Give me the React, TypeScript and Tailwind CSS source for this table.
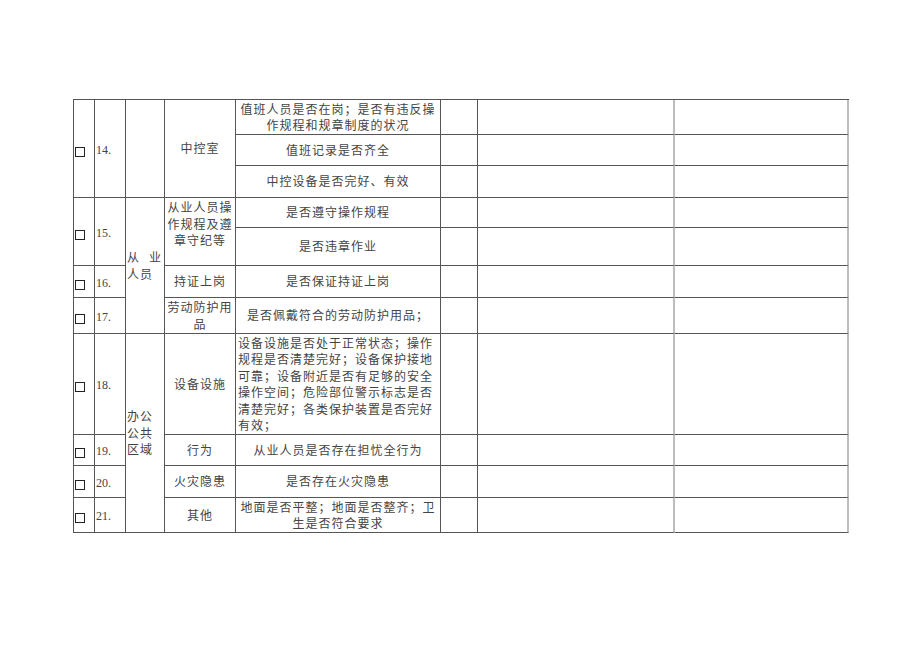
import React from 'react'

const cjk = { fontFamily: '"Noto Sans CJK SC", "Noto Sans", sans-serif' }
const serif = { fontFamily: '"Liberation Serif", "Times New Roman", serif' }

const cell = 'border-r border-b border-[#555] text-[12px] tracking-[1px] leading-[16.5px] text-[#444]'

type Group = {
  no: string
  start: number
  span: number
  item: string[]
  itemTop?: boolean
  content: { lines: string[]; left?: boolean }[]
}

const groups: Group[] = [
  {
    no: '14.',
    start: 1,
    span: 3,
    item: ['中控室'],
    content: [
      { lines: ['值班人员是否在岗；是否有违反操', '作规程和规章制度的状况'] },
      { lines: ['值班记录是否齐全'] },
      { lines: ['中控设备是否完好、有效'] },
    ],
  },
  {
    no: '15.',
    start: 4,
    span: 2,
    item: ['从业人员操', '作规程及遵', '章守纪等'],
    itemTop: true,
    content: [{ lines: ['是否遵守操作规程'] }, { lines: ['是否违章作业'] }],
  },
  { no: '16.', start: 6, span: 1, item: ['持证上岗'], content: [{ lines: ['是否保证持证上岗'] }] },
  {
    no: '17.',
    start: 7,
    span: 1,
    item: ['劳动防护用', '品'],
    content: [{ lines: ['是否佩戴符合的劳动防护用品；'] }],
  },
  {
    no: '18.',
    start: 8,
    span: 1,
    item: ['设备设施'],
    content: [
      {
        left: true,
        lines: [
          '设备设施是否处于正常状态；操作',
          '规程是否清楚完好；设备保护接地',
          '可靠；设备附近是否有足够的安全',
          '操作空间；危险部位警示标志是否',
          '清楚完好；各类保护装置是否完好',
          '有效；',
        ],
      },
    ],
  },
  { no: '19.', start: 9, span: 1, item: ['行为'], content: [{ lines: ['从业人员是否存在担忧全行为'] }] },
  { no: '20.', start: 10, span: 1, item: ['火灾隐患'], content: [{ lines: ['是否存在火灾隐患'] }] },
  {
    no: '21.',
    start: 11,
    span: 1,
    item: ['其他'],
    content: [{ lines: ['地面是否平整；地面是否整齐；卫', '生是否符合要求'] }],
  },
]

// row-start / row-span classes written out in full
const rowStart: Record<number, string> = {
  1: 'row-start-1', 2: 'row-start-2', 3: 'row-start-3', 4: 'row-start-4', 5: 'row-start-5', 6: 'row-start-6',
  7: 'row-start-7', 8: 'row-start-8', 9: 'row-start-9', 10: 'row-start-10', 11: 'row-start-11',
}
const rowSpan: Record<number, string> = { 1: 'row-span-1', 2: 'row-span-2', 3: 'row-span-3', 4: 'row-span-4' }

function Lines({ lines }: { lines: string[] }) {
  return (
    <>
      {lines.map((l, i) => (
        <div key={i} className="whitespace-nowrap">
          {l}
        </div>
      ))}
    </>
  )
}

export default function App() {
  const rows = Array.from({ length: 11 }, (_, i) => i + 1)
  return (
    <div className="min-h-[651px] bg-white pt-[99px] pl-[73px]" style={cjk}>
      <div className="grid w-fit grid-cols-[21px_31px_39px_71px_205px_37px_197px_174px] grid-rows-[35px_31px_32px_30px_38px_32px_36px_101px_31px_32px_35px] border-t border-l border-[#555]">
        {groups.map((g) => (
          <React.Fragment key={g.no}>
            {/* checkbox */}
            <div className={`${cell} col-start-1 ${rowStart[g.start]} ${rowSpan[g.span]} flex items-center pl-px`}>
              <span className="mt-[6px] h-[10px] w-[10px] border border-[#222]" />
            </div>
            {/* number */}
            <div
              className={`${cell} col-start-2 ${rowStart[g.start]} ${rowSpan[g.span]} flex items-center pl-[1px] text-[12.5px] text-[#111] tracking-normal`}
              style={serif}
            >
              <span className="mt-[3px]">{g.no}</span>
            </div>
            {/* item */}
            <div
              className={`${cell} col-start-4 ${rowStart[g.start]} ${rowSpan[g.span]} flex flex-col items-center text-center ${
                g.itemTop ? 'justify-start pt-[1px]' : 'justify-center'
              }`}
            >
              <Lines lines={g.item} />
            </div>
            {/* content */}
            {g.content.map((c, i) => (
              <div
                key={i}
                className={`${cell} col-start-5 ${rowStart[g.start + i]} flex flex-col justify-center ${
                  c.left ? 'items-start pl-[2px]' : 'items-center text-center'
                }`}
              >
                <Lines lines={c.lines} />
              </div>
            ))}
          </React.Fragment>
        ))}

        {/* category column */}
        <div className={`${cell} col-start-3 row-start-1 row-span-3`} />
        <div className={`${cell} col-start-3 row-start-4 row-span-4 flex flex-col justify-center pl-px pr-[2px]`}>
          <div className="flex justify-between">
            <span>从</span>
            <span>业</span>
          </div>
          <div>人员</div>
        </div>
        <div className={`${cell} col-start-3 row-start-8 row-span-4 flex flex-col justify-center pl-px`}>
          <div>办公</div>
          <div>公共</div>
          <div>区域</div>
        </div>

        {/* empty columns */}
        {rows.map((r) => (
          <React.Fragment key={r}>
            <div className={`${cell} col-start-6 ${rowStart[r]}`} />
            <div className={`${cell} col-start-7 ${rowStart[r]} border-r-2 border-r-[#bdbdbd]`} />
            <div className={`${cell} col-start-8 ${rowStart[r]} border-r-2 border-r-[#bdbdbd]`} />
          </React.Fragment>
        ))}
      </div>
    </div>
  )
}
